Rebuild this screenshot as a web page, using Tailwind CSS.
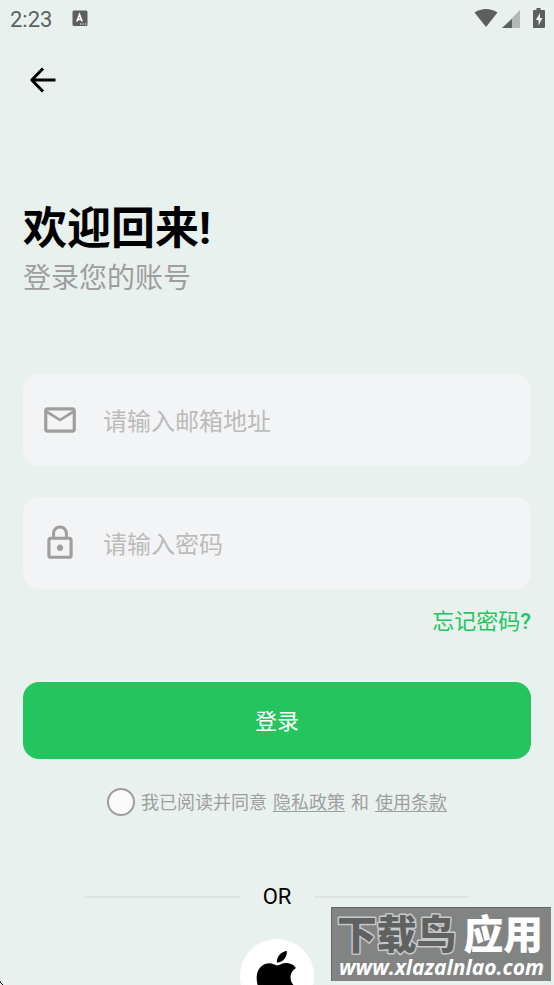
<!DOCTYPE html>
<html lang="zh-CN">
<head>
<meta charset="utf-8">
<meta name="viewport" content="width=device-width, initial-scale=1">
<title>登录</title>
<script src="https://cdn.jsdelivr.net/npm/@tailwindcss/browser@4"></script>
</head>
<body class="relative h-screen overflow-hidden bg-[#e8f1ee] font-[Roboto,'Noto_Sans_CJK_SC',sans-serif] text-black">
  <!-- Status bar -->
  <header class="flex h-10 items-center justify-between pl-2.5 pr-2 text-[#5d5f5e]">
    <div class="flex items-center gap-5">
      <span class="text-[22px] leading-6">2:23</span>
      <svg class="h-4 w-4 -mt-1" viewBox="0 0 16 16" aria-hidden="true">
        <rect x="0.5" y="0.5" width="15" height="15.5" rx="1.5" fill="currentColor"/>
        <path d="M4.800 11.500 7.500 4.500 10.200 11.500M5.800 9.300h3.400" fill="none" stroke="#fff" stroke-width="1.7"/>
        <path d="M8 14h1.300M10.500 14h1.300M13 14h1.300" stroke="#fff"/>
      </svg>
    </div>
    <div class="flex items-center gap-1 -mt-1">
      <svg class="h-5 w-6" viewBox="0 0 24 20" aria-hidden="true"><path d="M0.500 4.500C7-.2 17-.2 23.500 4.500L12 19Z" fill="currentColor"/></svg>
      <svg class="h-5 w-[18px]" viewBox="0 0 18 20" aria-hidden="true"><path d="M18 2v18H0Z" fill="#b2b8b6"/><path d="M10 10.900v9.100H0Z" fill="currentColor"/></svg>
      <svg class="ml-2 h-5 w-3.5" viewBox="0 0 14 20" aria-hidden="true"><path d="M4.500 0h4v2H12a1 1 0 0 1 1 1v16a1 1 0 0 1-1 1H2a1 1 0 0 1-1-1V3a1 1 0 0 1 1-1h2.500Z" fill="currentColor"/><path d="M8 5 3.800 12H6.500v5.500L10.500 10H8Z" fill="#e8f1ee"/></svg>
    </div>
  </header>

  <main class="px-[23px]">
    <button type="button" aria-label="返回" class="flex h-20 w-10 items-center justify-center">
      <svg class="h-7 w-7" viewBox="0 0 28 28" fill="none" stroke="#000" stroke-width="3" stroke-linejoin="round" aria-hidden="true"><path d="M26.500 14H3M14 2.500 2.800 14 14 25.500"/></svg>
    </button>

    <h1 class="mt-[83px] text-[44px] leading-[52px] font-bold">欢迎回来!</h1>
    <p class="mt-1 text-[28px] leading-10 text-[#9e9e9e]">登录您的账号</p>

    <form class="mt-[75px]">
      <div class="flex h-[92px] items-center gap-6 rounded-2xl bg-[#f3f4f6] px-[18px]">
        <label for="email" aria-label="邮箱地址"><svg class="h-[38px] w-[38px] text-[#9e9e9e]" viewBox="0 0 24 24" fill="currentColor" aria-hidden="true"><path d="M22 6c0-1.100-.9-2-2-2H4c-1.100 0-2 .9-2 2v12c0 1.100.9 2 2 2h16c1.100 0 2-.9 2-2V6Zm-2 0-8 5-8-5h16Zm0 12H4V8l8 5 8-5v10Z"/></svg></label>
        <input id="email" type="email" placeholder="请输入邮箱地址" class="min-w-0 flex-1 bg-transparent pt-1 text-2xl outline-none placeholder:text-[#bbbbbb]">
      </div>
      <div class="mt-[31px] flex h-[92px] items-center gap-6 rounded-2xl bg-[#f3f4f6] px-[18px]">
        <label for="password" aria-label="密码"><svg class="h-[38px] w-[38px] text-[#9e9e9e]" viewBox="0 0 24 24" fill="currentColor" aria-hidden="true"><path d="M12 17c1.100 0 2-.9 2-2s-.9-2-2-2-2 .9-2 2 .9 2 2 2Zm6-9h-1V6c0-2.760-2.240-5-5-5S7 3.240 7 6v2H6c-1.100 0-2 .9-2 2v10c0 1.100.9 2 2 2h12c1.100 0 2-.9 2-2V10c0-1.100-.9-2-2-2ZM8.900 6c0-1.710 1.390-3.100 3.100-3.100s3.100 1.390 3.100 3.100v2H8.900V6ZM18 20H6V10h12v10Z"/></svg></label>
        <input id="password" type="password" placeholder="请输入密码" class="min-w-0 flex-1 bg-transparent pt-1 text-2xl outline-none placeholder:text-[#bbbbbb]">
      </div>
      <div class="mt-[17px] flex justify-end">
        <a href="#" class="text-[22px] leading-8 text-[#24c55e]">忘记密码<span class="font-medium">?</span></a>
      </div>
      <button type="submit" class="mt-11 h-[77px] w-full rounded-2xl bg-[#24c55e] pt-0.5 text-[22px] text-white">登录</button>
      <div class="mt-7 flex items-center justify-center gap-1.5 text-lg leading-7 text-[#9e9e9e]">
        <input id="agree" type="checkbox" class="h-7 w-7 appearance-none rounded-full border-2 border-[#9e9e9e] bg-[#fafafa] checked:bg-[#24c55e]">
        <div class="flex gap-1.5 pt-0.5">
          <label for="agree">我已阅读并同意</label>
          <a href="#" class="underline decoration-1 underline-offset-2">隐私政策</a>
          <span>和</span>
          <a href="#" class="underline decoration-1 underline-offset-2">使用条款</a>
        </div>
      </div>
    </form>

    <div class="mt-16 flex items-center gap-[23px] px-[62px] text-[22px] leading-8">
      <span class="h-0.5 flex-1 bg-[#dfe3e2]"></span>
      <span>OR</span>
      <span class="h-0.5 flex-1 bg-[#dfe3e2]"></span>
    </div>
    <button type="button" aria-label="Apple" class="mx-auto mt-[26px] flex h-[74px] w-[74px] items-center justify-center rounded-full bg-white">
      <svg class="h-[60px] w-[60px]" viewBox="0 0 24 24" aria-hidden="true"><path d="M18.710 19.500c-.83 1.240-1.710 2.450-3.050 2.470-1.340.03-1.770-.79-3.290-.79-1.530 0-2 .77-3.270.82-1.310.05-2.300-1.320-3.140-2.530C4.250 17 2.940 12.450 4.700 9.390c.87-1.520 2.430-2.480 4.120-2.510 1.280-.02 2.500.87 3.290.87.780 0 2.260-1.070 3.810-.91.650.03 2.470.26 3.640 1.980-.09.06-2.170 1.280-2.150 3.810.03 3.020 2.650 4.030 2.680 4.040-.03.07-.42 1.440-1.380 2.830M13 3.500c.73-.83 1.940-1.460 2.940-1.500.13 1.170-.34 2.350-1.040 3.190-.69.85-1.830 1.510-2.950 1.420-.15-1.150.41-2.350 1.050-3.110Z"/></svg>
    </button>
  </main>

  <!-- Watermark badge -->
  <aside class="absolute right-[3px] bottom-1 flex h-[74px] w-[220px] flex-col items-center justify-end border-t border-l border-[#666] bg-[#828483] pb-0.5 whitespace-nowrap text-white">
    <svg class="w-full overflow-visible" viewBox="0 0 220 46" font-family="Noto Sans CJK SC, sans-serif" font-size="40" font-weight="900" stroke-linejoin="round" paint-order="stroke" role="img" aria-label="下载鸟应用">
      <text x="5" y="40" fill="#606261" stroke="#c8c9c9" stroke-width="3">下载鸟</text>
      <text x="132" y="40" fill="#fff">应用</text>
    </svg>
    <span class="font-['Open_Sans',sans-serif] text-[21px] leading-6 font-bold italic">www.xlazalnlao.com</span>
  </aside>
  <svg class="absolute bottom-0 left-0 h-1 w-1" viewBox="0 0 4 4" aria-hidden="true"><path d="M0 0v2h1v1h1v1h1v-1h-1v-1h-1v-1Z"/></svg>
</body>
</html>
